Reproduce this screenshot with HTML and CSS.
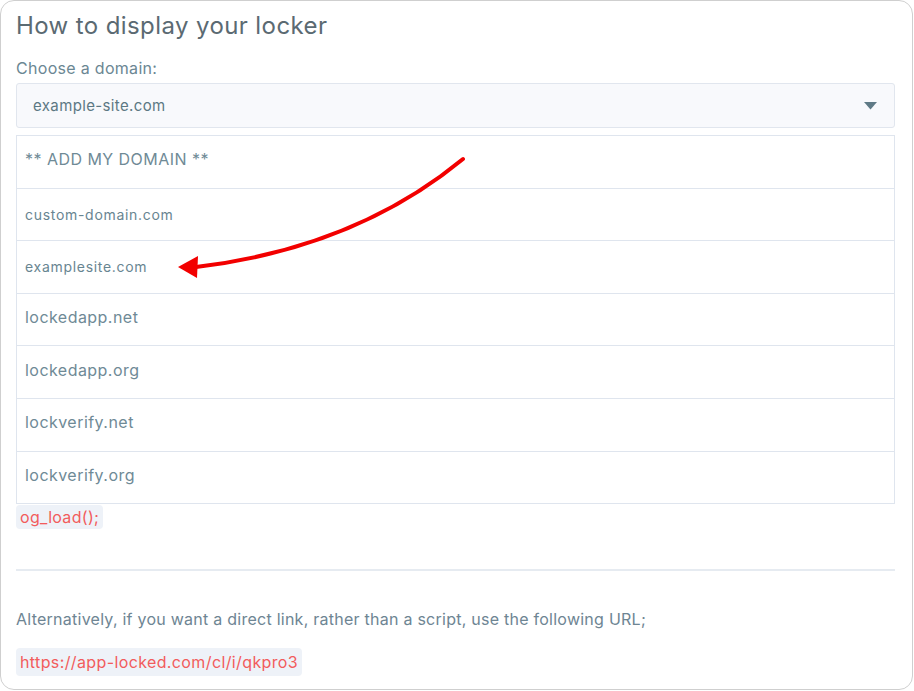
FILE: index.html
```html
<!DOCTYPE html>
<html>
<head>
<meta charset="utf-8">
<link rel="stylesheet" href="styles.css">
</head>
<body>
<div class="card">
  <h1 class="title">How to display your locker</h1>
  <div class="label">Choose a domain:</div>
  <div class="select">
    <span class="select-value">example-site.com</span>
    <svg class="caret" width="13" height="8" viewBox="0 0 13 8"><path d="M0 0H13L6.5 7.5Z" fill="#5f7a86"/></svg>
  </div>
  <div class="list-wrap">
    <ul class="list">
      <li class="opt">** ADD MY DOMAIN **</li>
      <li class="opt small">custom-domain.com</li>
      <li class="opt small">examplesite.com</li>
      <li class="opt">lockedapp.net</li>
      <li class="opt">lockedapp.org</li>
      <li class="opt">lockverify.net</li>
      <li class="opt">lockverify.org</li>
    </ul>
    <svg class="arrow" width="300" height="130" viewBox="170 150 300 130">
      <path d="M463 159 Q 355 248 196 267" fill="none" stroke="#f20000" stroke-width="4" stroke-linecap="round"/>
      <path d="M178 267 L198 256 L197 278 Z" fill="#f20000"/>
    </svg>
  </div>
  <code class="code">og_load();</code>
  <hr class="rule">
  <p class="alt">Alternatively, if you want a direct link, rather than a script, use the following URL;</p>
  <code class="code url">https://app-locked.com/cl/i/qkpro3</code>
</div>
</body>
</html>
```
FILE: styles.css
```css
html, body {
  margin: 0;
  padding: 0;
  background: #ffffff;
}
body {
  font-family: Inter, "Open Sans", sans-serif;
}
.card {
  box-sizing: border-box;
  width: 913px;
  height: 690px;
  border: 1px solid #cfcfcf;
  border-radius: 14px;
  padding: 0 17px 0 15px;
  display: flex;
  flex-direction: column;
  align-items: flex-start;
  background: #fff;
}
.title {
  margin: 10px 0 0 0;
  font-size: 24px;
  font-weight: 400;
  line-height: 30px;
  color: #5b6a72;
  letter-spacing: 0.4px;
}
.label {
  margin-top: 17px;
  font-size: 16px;
  line-height: 20px;
  color: #6b8793;
  letter-spacing: 0.3px;
}
.select {
  box-sizing: border-box;
  margin-top: 5px;
  width: 100%;
  height: 45px;
  background: #f8f9fc;
  border: 1px solid #e1e6ee;
  border-radius: 3px;
  display: flex;
  align-items: center;
  justify-content: space-between;
  padding: 0 17px 0 16px;
}
.select-value {
  font-size: 15px;
  color: #5c7883;
  letter-spacing: 0.37px;
}
.caret {
  display: block;
}
.list-wrap {
  position: relative;
  width: 100%;
  margin-top: 7px;
}
.list {
  list-style: none;
  margin: 0;
  padding: 0;
  border: 1px solid #dfe5ee;
}
.opt {
  box-sizing: border-box;
  height: 52.6px;
  display: flex;
  align-items: center;
  padding: 0 0 5px 8px;
  font-size: 16px;
  color: #6f8a96;
  letter-spacing: 0.46px;
  border-top: 1px solid #dfe5ee;
}
.opt:first-child {
  border-top: none;
  height: 51.6px;
}
.opt.small {
  font-size: 14px;
  color: #688591;
  letter-spacing: 0.7px;
  padding-bottom: 0;
}
.arrow {
  position: absolute;
  left: 154px;
  top: 15px;
}
.code {
  display: inline-block;
  margin-top: 1px;
  padding: 2px 4px 2px 4px;
  background: #eef2f8;
  border-radius: 4px;
  font-family: Inter, "Open Sans", sans-serif;
  font-size: 16px;
  line-height: 20px;
  color: #f25c5c;
  letter-spacing: 0.3px;
}
.rule {
  width: 100%;
  margin: 40px 0 0 0;
  border: none;
  border-top: 2px solid #e6ebf1;
}
.alt {
  margin: 38px 0 0 0;
  font-size: 16px;
  line-height: 20px;
  color: #6e8593;
  letter-spacing: 0.25px;
}
.url {
  margin-top: 19px;
  padding: 4px 4px;
  letter-spacing: 0.38px;
}
```
